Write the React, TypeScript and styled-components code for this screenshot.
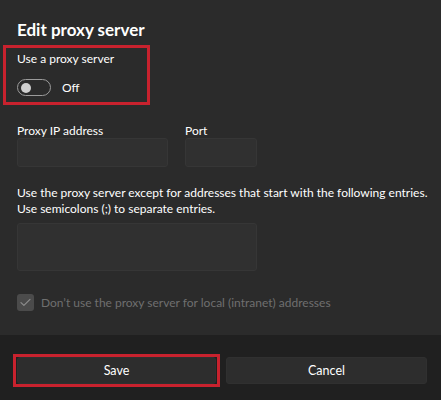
import React, { ReactElement } from "react";
import styled, { createGlobalStyle } from "styled-components";

const GlobalStyle = createGlobalStyle`
  html, body {
    margin: 0;
    padding: 0;
    background: #2b2b2b;
  }
  * {
    box-sizing: border-box;
  }
`;

const FONT = `Lato, "Noto Sans", sans-serif`;

const Dialog = styled.div`
  width: 441px;
  height: 400px;
  display: flex;
  flex-direction: column;
  background: #2b2b2b;
  color: #ffffff;
  font-family: ${FONT};
  font-size: 12px;
  overflow: hidden;
`;

const Body = styled.div`
  flex: 1;
  display: flex;
  flex-direction: column;
  padding: 16px 8px 0 17px;
`;

const Title = styled.h1`
  margin: 0;
  font-size: 17px;
  font-weight: 700;
  line-height: 28px;
`;

const Highlight = styled.div`
  width: 147px;
  height: 60px;
  margin: 1px 0 0 -14px;
  padding: 4px 0 0 11px;
  border: 3px solid #c8222e;
  display: flex;
  flex-direction: column;
  gap: 13px;
`;

const Label = styled.div<{ $muted?: boolean }>`
  font-size: 12px;
  line-height: 14px;
  white-space: nowrap;
  color: ${({ $muted }) => ($muted ? "#6f6f6f" : "#ffffff")};
`;

const ToggleRow = styled.div`
  display: flex;
  align-items: center;
  gap: 11px;
`;

const Track = styled.div`
  width: 34px;
  height: 17px;
  border: 1px solid #9b9b9b;
  border-radius: 9px;
  display: flex;
  align-items: center;
  padding-left: 3px;
`;

const Knob = styled.div`
  width: 10px;
  height: 10px;
  border-radius: 50%;
  background: #cfcfcf;
`;

const FieldRow = styled.div`
  display: flex;
  gap: 17px;
  margin-top: 19px;
`;

const Field = styled.div`
  display: flex;
  flex-direction: column;
`;

const Input = styled.div<{ $width: number; $height?: number }>`
  width: ${({ $width }) => $width}px;
  height: ${({ $height }) => $height ?? 29}px;
  background: #303030;
  border: 1px solid #363636;
  border-radius: 3px;
`;

const Description = styled.p`
  margin: 18px 0 6px;
  font-size: 12px;
  line-height: 16px;
  white-space: nowrap;
  color: #ffffff;
`;

const CheckRow = styled.div`
  display: flex;
  align-items: center;
  gap: 7px;
  margin-top: 23px;
`;

const CheckBox = styled.div`
  width: 17px;
  height: 17px;
  border-radius: 3px;
  background: #4b4b4b;
  display: flex;
  align-items: center;
  justify-content: center;
`;

const Footer = styled.div`
  height: 65px;
  background: #202020;
  display: flex;
  align-items: center;
  gap: 6px;
  padding: 6px 14px 0 13px;
`;

const SaveFrame = styled.div`
  flex: 0 0 207px;
  height: 33px;
  border: 3px solid #c8222e;
  padding: 0 1px;
  display: flex;
`;

const Button = styled.button`
  flex: 1;
  height: 27px;
  border: 1px solid #303030;
  border-radius: 3px;
  background: #2d2d2d;
  color: #ffffff;
  font-family: ${FONT};
  font-size: 12.5px;
  padding: 0;
`;

const App = (): ReactElement => {
  return (
    <Dialog>
      <GlobalStyle />
      <Body>
        <Title>Edit proxy server</Title>
        <Highlight>
          <Label>Use a proxy server</Label>
          <ToggleRow>
            <Track>
              <Knob />
            </Track>
            <Label>Off</Label>
          </ToggleRow>
        </Highlight>
        <FieldRow>
          <Field>
            <Label>Proxy IP address</Label>
            <Input $width={151} />
          </Field>
          <Field>
            <Label>Port</Label>
            <Input $width={72} />
          </Field>
        </FieldRow>
        <Description>
          Use the proxy server except for addresses that start with the following entries.
          <br />
          Use semicolons (;) to separate entries.
        </Description>
        <Input $width={240} $height={48} />
        <CheckRow>
          <CheckBox>
            <svg width="11" height="9" viewBox="0 0 11 9" fill="none">
              <path
                d="M1 4.6 L3.9 7.4 L10 1.3"
                stroke="#8d8d8d"
                strokeWidth="1.2"
                strokeLinecap="round"
                strokeLinejoin="round"
              />
            </svg>
          </CheckBox>
          <Label $muted>Don’t use the proxy server for local (intranet) addresses</Label>
        </CheckRow>
      </Body>
      <Footer>
        <SaveFrame>
          <Button>Save</Button>
        </SaveFrame>
        <Button>Cancel</Button>
      </Footer>
    </Dialog>
  );
};

export default App;
